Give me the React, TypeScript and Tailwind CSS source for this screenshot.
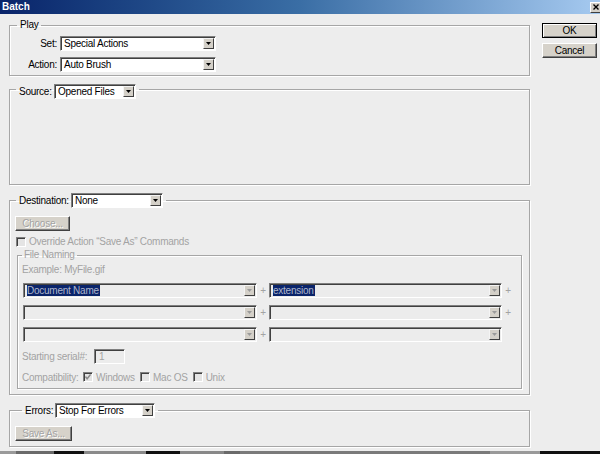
import React from 'react';
import clsx from 'clsx';

type ComboProps = {
  className?: string;
  value?: string;
  disabled?: boolean;
  selected?: boolean;
};

const Arrow = ({ disabled }: { disabled?: boolean }) => (
  <div className="w-[11px] h-[11px] mr-[1px] shrink-0 flex items-center justify-center bg-[#d4d0c8] border border-t-[#f4f4f4] border-l-[#f4f4f4] border-b-[#404040] border-r-[#404040]">
    <svg width="5" height="3" viewBox="0 0 5 3">
      <polygon points="0,0 5,0 2.5,3" fill={disabled ? '#9a9a9a' : '#000'} />
    </svg>
  </div>
);

const Combo = ({ className, value, disabled, selected }: ComboProps) => (
  <div
    className={clsx(
      'flex items-center border border-t-[#7f7f7f] border-l-[#7f7f7f] border-r-white border-b-white shadow-[inset_1px_1px_0_#404040]',
      disabled ? 'bg-[#ececec]' : 'bg-white',
      className
    )}
  >
    <div className="flex-1 min-w-0 pl-[3px] leading-[11px] whitespace-nowrap overflow-hidden">
      {value && (
        <span className={selected ? 'bg-[#0a246a] text-[#aeb6cc] pr-[1px]' : 'text-black'}>{value}</span>
      )}
    </div>
    <Arrow disabled={disabled} />
  </div>
);

const Button = ({ label, className, disabled, isDefault }: { label: string; className?: string; disabled?: boolean; isDefault?: boolean }) => (
  <div
    className={clsx(
      'h-[15px] flex items-center justify-center bg-[#d6d2ca] leading-[11px]',
      isDefault
        ? 'border border-black shadow-[inset_1px_1px_0_#fff,inset_-1px_-1px_0_#808080]'
        : 'border border-t-white border-l-white border-b-[#404040] border-r-[#404040] shadow-[inset_-1px_-1px_0_#808080]',
      disabled ? 'text-[#a3a3a3] [text-shadow:1px_1px_0_#fff]' : 'text-black',
      className
    )}
  >
    {label}
  </div>
);

const CheckBox = ({ checked }: { checked?: boolean }) => (
  <div className="w-[10px] h-[10px] shrink-0 flex items-center justify-center bg-[#e4e4e4] border border-t-[#808080] border-l-[#808080] border-b-white border-r-white shadow-[inset_1px_1px_0_#404040]">
    {checked && (
      <svg width="6" height="6" viewBox="0 0 7 7">
        <polyline points="0.5,3 2.5,5.5 6.5,0.5" fill="none" stroke="#8a8a8a" strokeWidth="1.7" />
      </svg>
    )}
  </div>
);

const groupBorder = 'border border-[#a6a6a6] shadow-[1px_1px_0_#fff,inset_1px_1px_0_#fff]';

const App = () => {
  return (
    <div className="w-[600px] h-[454px] overflow-hidden flex flex-col bg-[#ededed] text-black text-[10px] tracking-[-0.25px] whitespace-nowrap font-['Liberation_Sans',Arial,sans-serif]">
      {/* Title bar */}
      <div className="h-[14px] shrink-0 flex items-center bg-linear-to-r from-[#0a246a] via-[#3a6ea5] to-[#a6caf0]">
        <span className="pl-[2px] text-white font-bold text-[10px] leading-[12px] tracking-normal">Batch</span>
        <div className="ml-auto mr-[-2px] w-[12px] h-[11px] flex items-center justify-center bg-[#d4d0c8] border border-t-white border-l-white border-b-[#404040] border-r-[#404040]">
          <svg width="6" height="6" viewBox="0 0 6 6">
            <path d="M0.5 0.5 L5.5 5.5 M5.5 0.5 L0.5 5.5" stroke="#000" strokeWidth="1.4" />
          </svg>
        </div>
      </div>

      <div className="flex flex-1 min-h-0">
        {/* Left column */}
        <div className="ml-[9px] w-[521px] flex flex-col">
          {/* Play */}
          <fieldset className={clsx('mt-[4px] pb-[3px]', groupBorder)}>
            <legend className="ml-[7px] px-[3px] leading-[14px]">Play</legend>
            <div className="mt-[4px] flex items-center">
              <span className="w-[47px] mr-[3px] text-right">Set:</span>
              <Combo className="w-[156px] h-[15px]" value="Special Actions" />
            </div>
            <div className="mt-[6px] flex items-center">
              <span className="w-[47px] mr-[3px] text-right">Action:</span>
              <Combo className="w-[156px] h-[15px]" value="Auto Brush" />
            </div>
          </fieldset>

          {/* Source */}
          <fieldset className={clsx('mt-[4px]', groupBorder)}>
            <legend className="ml-[6px] px-[3px] pt-[4px] flex items-center">
              <span className="w-[35px]">Source:</span>
              <Combo className="w-[82px] h-[15px]" value="Opened Files" />
            </legend>
            <div className="h-[85px]" />
          </fieldset>

          {/* Destination */}
          <fieldset className={clsx('mt-[8px] pb-[5px]', groupBorder)}>
            <legend className="ml-[6px] px-[3px] flex items-center">
              <span className="w-[52px]">Destination:</span>
              <Combo className="w-[92px] h-[15px]" value="None" />
            </legend>
            <Button label="Choose..." disabled className="mt-[8px] ml-[5px] w-[55px]" />
            <div className="mt-[5px] ml-[6px] h-[11px] flex items-center gap-[3px] text-[#a3a3a3]">
              <CheckBox />
              <span className="leading-[11px]">Override Action “Save As” Commands</span>
            </div>

            {/* File Naming */}
            <fieldset className={clsx('mt-[2px] ml-[7px] w-[505px] pb-[5px] text-[#a3a3a3]', groupBorder)}>
              <legend className="ml-[4px] px-[2px] leading-[12px]">File Naming</legend>
              <div className="mt-[3px] pl-[4px] leading-[12px]">Example: MyFile.gif</div>
              <div className="mt-[7px] pl-[5px] flex flex-col gap-[7px]">
                {[0, 1, 2].map((i) => (
                  <div key={i} className="flex items-center">
                    <Combo
                      disabled
                      selected={i === 0}
                      value={i === 0 ? 'Document Name' : undefined}
                      className="w-[234px] h-[15px]"
                    />
                    <span className="w-[12px] text-center">+</span>
                    <Combo
                      disabled
                      selected={i === 0}
                      value={i === 0 ? 'extension' : undefined}
                      className="w-[233px] h-[15px]"
                    />
                    {i < 2 && <span className="w-[12px] text-center">+</span>}
                  </div>
                ))}
              </div>
              <div className="mt-[7px] pl-[4px] flex items-center">
                <span className="w-[72px]">Starting serial#:</span>
                <div className="w-[31px] h-[15px] pl-[4px] leading-[13px] bg-[#ececec] border border-t-[#7f7f7f] border-l-[#7f7f7f] border-r-white border-b-white shadow-[inset_1px_1px_0_#404040]">
                  1
                </div>
              </div>
              <div className="mt-[7px] pl-[4px] h-[12px] flex items-center">
                <span className="w-[61px]">Compatibility:</span>
                <div className="w-[57px] flex items-center gap-[3px]">
                  <CheckBox checked />
                  <span>Windows</span>
                </div>
                <div className="flex items-center gap-[3px]">
                  <CheckBox />
                  <span>Mac OS</span>
                </div>
                <div className="ml-[5px] flex items-center gap-[3px]">
                  <CheckBox />
                  <span>Unix</span>
                </div>
              </div>
            </fieldset>
          </fieldset>

          {/* Errors */}
          <fieldset className={clsx('mt-[8px] pb-[5px]', groupBorder)}>
            <legend className="ml-[12px] px-[3px] flex items-center">
              <span className="w-[30px]">Errors:</span>
              <Combo className="w-[100px] h-[15px]" value="Stop For Errors" />
            </legend>
            <Button label="Save As..." disabled className="mt-[8px] ml-[5px] w-[57px]" />
          </fieldset>
        </div>

        {/* Right column */}
        <div className="ml-[12px] mt-[9px] flex flex-col gap-[5px]">
          <Button label="OK" isDefault className="w-[55px]" />
          <Button label="Cancel" className="w-[55px]" />
        </div>
      </div>

      {/* Taskbar sliver */}
      <div className="h-[3px] shrink-0 flex bg-[#6a6a6a]">
        <div className="w-[16px] bg-[#9a9a9a]" />
        <div className="w-[38px]" />
        <div className="w-[30px] bg-[#111]" />
        <div className="w-[62px] bg-[#8a8a8a]" />
        <div className="w-[34px] bg-[#111]" />
        <div className="w-[44px] bg-[#888]" />
        <div className="w-[16px]" />
        <div className="w-[250px] bg-[#7a7a7a]" />
        <div className="w-[50px] bg-[#999]" />
        <div className="w-[60px] bg-[#111]" />
      </div>
    </div>
  );
};

export default App;
